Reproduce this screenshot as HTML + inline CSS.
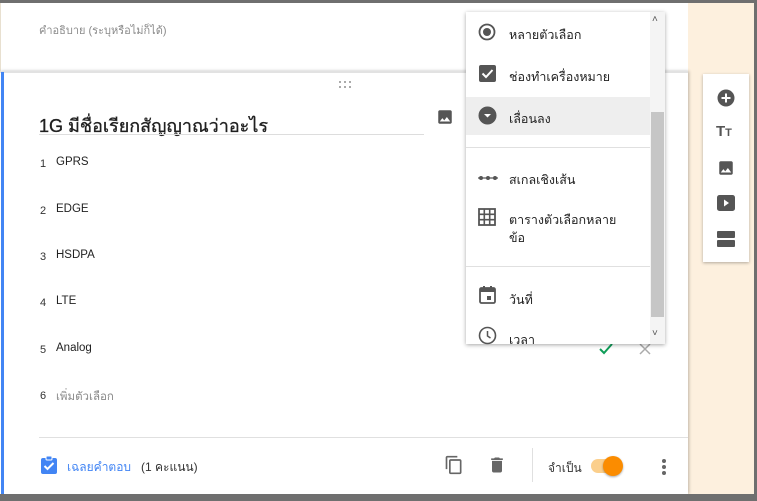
<!DOCTYPE html>
<html><head><meta charset="utf-8"><style>
*{margin:0;padding:0;box-sizing:border-box}
body{width:757px;height:501px;overflow:hidden;background:#fdf0de;font-family:"Liberation Sans","Noto Sans CJK SC",sans-serif;position:relative}
.abs{position:absolute}
.top{left:0;top:0;width:757px;height:3px;background:#6f6f6f}
.bot{left:0;top:494px;width:757px;height:7px;background:#6f6f6f}
.rb{left:754px;top:0;width:3px;height:501px;background:#6f6f6f}
.card1{left:0;top:3px;width:688px;height:68px;background:#fff;border-left:1px solid #e8e0d0}
.card2{left:0;top:71px;width:688px;height:423px;background:#fff;border-top:2px solid #e2e2e2;box-shadow:1px 0 3px rgba(0,0,0,.25)}
.blue{left:1px;top:72px;width:3px;height:422px;background:#4285f4}
.t{position:absolute;white-space:nowrap}
.opt{font-size:11.5px;color:#222}
.num{font-size:11px;color:#333}
.menu{left:466px;top:12px;width:199px;height:332px;background:#fff;box-shadow:0 1px 4px rgba(0,0,0,.35)}
.mi{position:absolute;left:14px;font-size:12.5px;color:#222}
.side{left:703px;top:74px;width:46px;height:188px;background:#fff;box-shadow:0 1px 3px rgba(0,0,0,.3)}
.d{position:absolute;width:2px;height:2px;background:#aaa}
</style></head><body>
<div class="abs card1"></div>
<div class="t" style="left:39px;top:21px;font-size:11px;color:#8a8a8a">คำอธิบาย (ระบุหรือไม่ก็ได้)</div>
<div class="abs card2"></div>
<div class="abs blue"></div>
<div class="d" style="left:339px;top:81px"></div><div class="d" style="left:344px;top:81px"></div><div class="d" style="left:349px;top:81px"></div>
<div class="d" style="left:339px;top:86px"></div><div class="d" style="left:344px;top:86px"></div><div class="d" style="left:349px;top:86px"></div>
<div class="t" style="left:39px;top:111px;font-size:18px;color:#202020;-webkit-text-stroke:0.3px #202020">1G มีชื่อเรียกสัญญาณว่าอะไร</div>
<div class="abs" style="left:39px;top:134px;width:385px;height:1px;background:#ddd"></div>
<svg class="abs" style="left:436px;top:108px" width="18" height="18" viewBox="0 0 24 24"><path fill="#555" d="M21 19V5c0-1.1-.9-2-2-2H5c-1.1 0-2 .9-2 2v14c0 1.1.9 2 2 2h14c1.1 0 2-.9 2-2zM8.5 13.5l2.5 3 3.5-4.5 4.5 6H5l3.5-4.5z"/></svg>
<div class="t num" style="left:40px;top:158px">1</div><div class="t opt" style="left:56px;top:156px">GPRS</div>
<div class="t num" style="left:40px;top:205px">2</div><div class="t opt" style="left:56px;top:203px">EDGE</div>
<div class="t num" style="left:40px;top:251px">3</div><div class="t opt" style="left:56px;top:249px">HSDPA</div>
<div class="t num" style="left:40px;top:297px">4</div><div class="t opt" style="left:56px;top:295px">LTE</div>
<div class="t num" style="left:40px;top:344px">5</div><div class="t opt" style="left:56px;top:342px">Analog</div>
<div class="t num" style="left:40px;top:390px">6</div><div class="t" style="left:56px;top:388px;font-size:11.5px;color:#888">เพิ่มตัวเลือก</div>
<svg class="abs" style="left:598px;top:342px" width="16" height="14" viewBox="0 0 16 14"><path d="M2 7l4 4 8-9" stroke="#0f9d58" stroke-width="2" fill="none"/></svg>
<svg class="abs" style="left:639px;top:343px" width="12" height="12" viewBox="0 0 12 12"><path d="M1 1l10 10M11 1L1 11" stroke="#aaa" stroke-width="1.5"/></svg>
<div class="abs" style="left:39px;top:437px;width:649px;height:1px;background:#e0e0e0"></div>
<svg class="abs" style="left:40px;top:455px" width="18" height="19" viewBox="0 0 18 19"><rect x="1" y="3" width="16" height="16" rx="2" fill="#4285f4"/><rect x="6" y="1" width="6" height="4" rx="1" fill="#4285f4" stroke="#fff"/><path d="M4.5 11l3 3 6-6" stroke="#fff" stroke-width="2" fill="none"/></svg>
<div class="t" style="left:67px;top:458px;font-size:12px;color:#4285f4">เฉลยคำตอบ</div>
<div class="t" style="left:141px;top:458px;font-size:12px;color:#333">(1 คะแนน)</div>
<svg class="abs" style="left:444px;top:454px" width="20" height="22" viewBox="0 0 24 24"><path fill="#666" d="M16 1H4c-1.1 0-2 .9-2 2v14h2V3h12V1zm3 4H8c-1.1 0-2 .9-2 2v14c0 1.1.9 2 2 2h11c1.1 0 2-.9 2-2V7c0-1.1-.9-2-2-2zm0 16H8V7h11v14z"/></svg>
<svg class="abs" style="left:487px;top:455px" width="20" height="20" viewBox="0 0 24 24"><path fill="#666" d="M6 19c0 1.1.9 2 2 2h8c1.1 0 2-.9 2-2V7H6v12zM19 4h-3.5l-1-1h-5l-1 1H5v2h14V4z"/></svg>
<div class="abs" style="left:532px;top:448px;width:1px;height:34px;background:#e0e0e0"></div>
<div class="t" style="left:548px;top:459px;font-size:12px;color:#333">จำเป็น</div>
<div class="abs" style="left:591px;top:459px;width:28px;height:14px;border-radius:7px;background:#fbcf8c"></div>
<div class="abs" style="left:603px;top:456px;width:20px;height:20px;border-radius:50%;background:#fb8c00;box-shadow:0 1px 2px rgba(0,0,0,.35)"></div>
<div class="abs" style="left:662px;top:459px;width:4px;height:4px;border-radius:50%;background:#666;box-shadow:0 6px 0 #666,0 12px 0 #666"></div>
<div class="abs menu">
 <div class="abs" style="left:0;top:85px;width:184px;height:38px;background:#eee"></div>
 <div class="abs" style="left:184px;top:0;width:15px;height:332px;background:#f4f4f4"></div>
 <div class="abs" style="left:185px;top:100px;width:13px;height:205px;background:#c6c6c6"></div>
 <div class="t" style="left:186px;top:2px;font-size:10px;color:#555">˄</div>
 <div class="t" style="left:186px;top:316px;font-size:10px;color:#555">˅</div>
 <div class="abs" style="left:0;top:135px;width:184px;height:1px;background:#e0e0e0"></div>
 <div class="abs" style="left:0;top:254px;width:184px;height:1px;background:#e0e0e0"></div>
 <svg class="abs" style="left:12px;top:11px" width="18" height="18" viewBox="0 0 18 18"><circle cx="9" cy="9" r="7.5" stroke="#555" stroke-width="1.8" fill="none"/><circle cx="9" cy="9" r="4" fill="#555"/></svg>
 <div class="mi" style="left:43px;top:13px">หลายตัวเลือก</div>
 <svg class="abs" style="left:13px;top:53px" width="17" height="17" viewBox="0 0 17 17"><rect width="17" height="17" rx="2" fill="#555"/><path d="M3.5 8.5l3.5 3.5 6.5-7" stroke="#fff" stroke-width="2" fill="none"/></svg>
 <div class="mi" style="left:43px;top:55px">ช่องทำเครื่องหมาย</div>
 <svg class="abs" style="left:12px;top:94px" width="19" height="19" viewBox="0 0 19 19"><circle cx="9.5" cy="9.5" r="9" fill="#555"/><path d="M6 8l3.5 3.5L13 8z" fill="#fff"/></svg>
 <div class="mi" style="left:43px;top:97px">เลื่อนลง</div>
 <svg class="abs" style="left:12px;top:163px" width="20" height="6" viewBox="0 0 20 6"><path d="M0 3h20" stroke="#555" stroke-width="1.3"/><circle cx="3" cy="3" r="2" fill="#555"/><circle cx="10" cy="3" r="2" fill="#555"/><circle cx="17" cy="3" r="2" fill="#555"/></svg>
 <div class="mi" style="left:43px;top:158px">สเกลเชิงเส้น</div>
 <svg class="abs" style="left:12px;top:196px" width="18" height="18" viewBox="0 0 18 18"><rect x="1" y="1" width="16" height="16" fill="none" stroke="#555" stroke-width="1.8"/><path d="M6.3 1v16M11.7 1v16M1 6.3h16M1 11.7h16" stroke="#555" stroke-width="1.6"/></svg>
 <div class="mi" style="left:43px;top:199px;line-height:18px">ตารางตัวเลือกหลาย<br>ข้อ</div>
 <svg class="abs" style="left:13px;top:273px" width="17" height="19" viewBox="0 0 17 19"><rect x="1" y="3" width="15" height="15" rx="1.5" fill="none" stroke="#555" stroke-width="1.8"/><rect x="1" y="3" width="15" height="4" fill="#555"/><rect x="4" y="1" width="2" height="3" fill="#555"/><rect x="11" y="1" width="2" height="3" fill="#555"/><rect x="8" y="11" width="4" height="4" fill="#555"/></svg>
 <div class="mi" style="left:43px;top:278px">วันที่</div>
 <svg class="abs" style="left:12px;top:314px" width="19" height="19" viewBox="0 0 19 19"><circle cx="9.5" cy="9.5" r="8" fill="none" stroke="#555" stroke-width="1.6"/><path d="M9.5 5v5l3 2" stroke="#555" stroke-width="1.5" fill="none"/></svg>
 <div class="mi" style="left:43px;top:318px;height:14px;overflow:hidden">เวลา</div>
</div>
<div class="abs side">
 <svg class="abs" style="left:14px;top:15px" width="18" height="18" viewBox="0 0 18 18"><circle cx="9" cy="9" r="8.5" fill="#555"/><path d="M9 4.5v9M4.5 9h9" stroke="#fff" stroke-width="2"/></svg>
 <div class="t" style="left:13px;top:49px;font-size:15px;font-weight:bold;color:#555">T<span style="font-size:11px">T</span></div>
 <svg class="abs" style="left:14px;top:85px" width="18" height="18" viewBox="0 0 24 24"><path fill="#555" d="M21 19V5c0-1.1-.9-2-2-2H5c-1.1 0-2 .9-2 2v14c0 1.1.9 2 2 2h14c1.1 0 2-.9 2-2zM8.5 13.5l2.5 3 3.5-4.5 4.5 6H5l3.5-4.5z"/></svg>
 <svg class="abs" style="left:14px;top:121px" width="18" height="16" viewBox="0 0 18 16"><rect width="18" height="16" rx="2.5" fill="#555"/><path d="M7 4.5v7l5-3.5z" fill="#fff"/></svg>
 <div class="abs" style="left:14px;top:157px;width:18px;height:7px;background:#555;border-radius:1px"></div>
 <div class="abs" style="left:14px;top:166px;width:18px;height:7px;background:#555;border-radius:1px"></div>
</div>
<div class="abs top"></div>
<div class="abs bot"></div>
<div class="abs rb"></div>
</body></html>
